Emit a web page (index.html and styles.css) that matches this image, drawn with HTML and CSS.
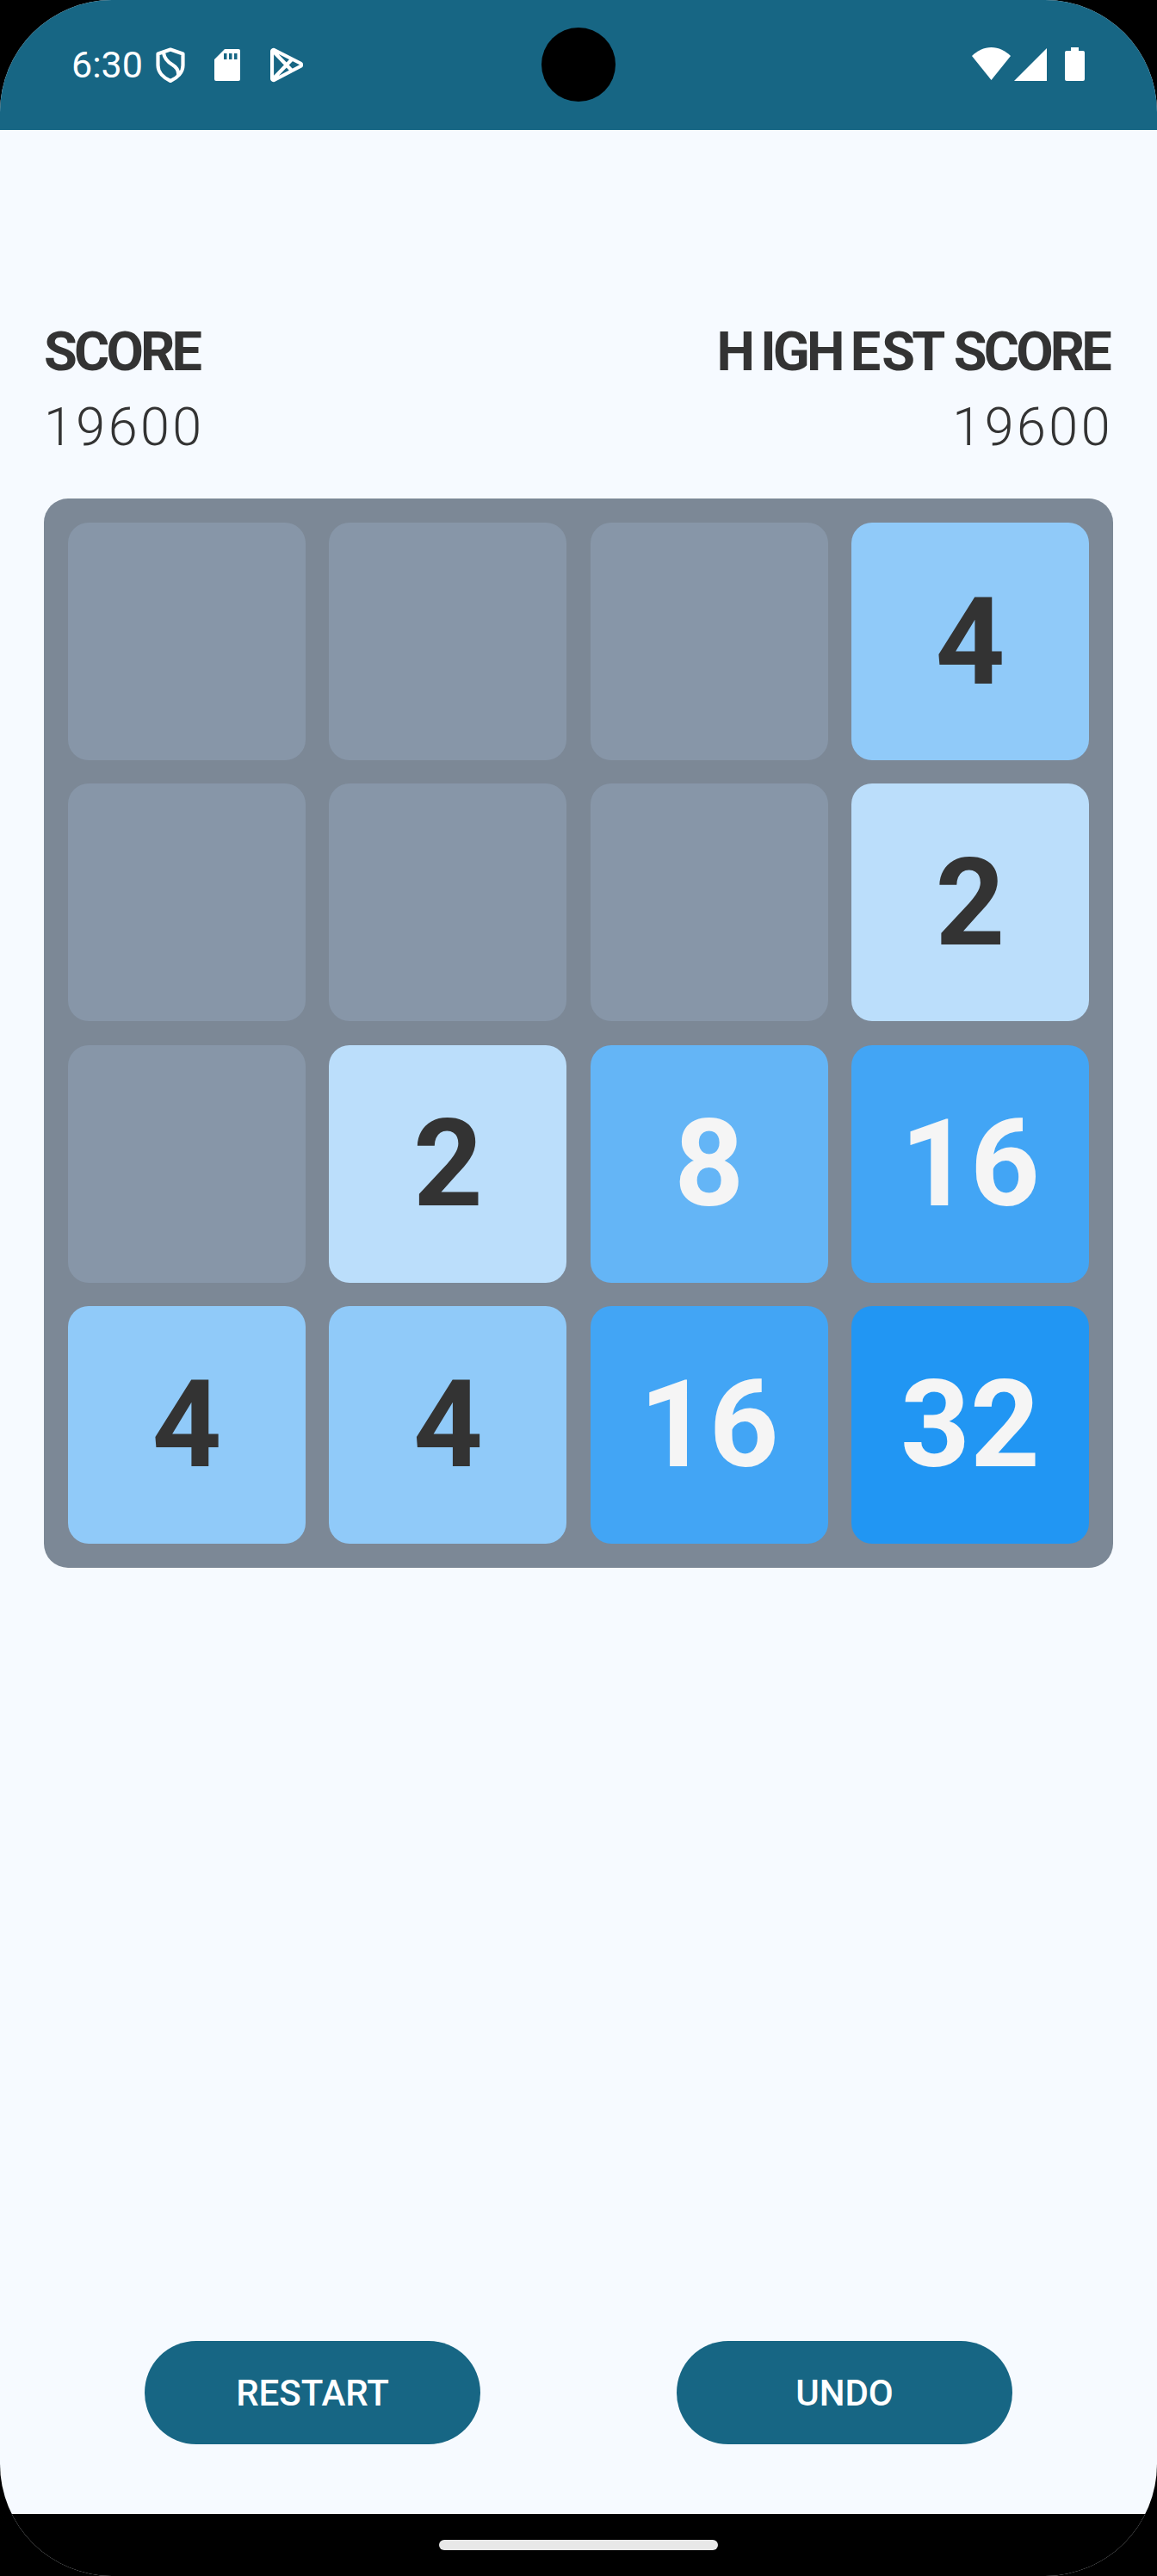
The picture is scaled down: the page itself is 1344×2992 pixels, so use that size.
FILE: index.html
```html
<!DOCTYPE html>
<html lang="en">
<head>
<meta charset="utf-8">
<title>2048</title>
<link rel="stylesheet" href="styles.css">
</head>
<body>
<div class="screen">
  <header class="status">
    <div class="status-left">
      <span class="time">6:30</span>
      <svg class="ic-shield" viewBox="0 0 34 41"><path d="M17 2.500 L31.500 7.500 V21 C31.500 29 25 35.500 17 39 C9 35.500 2.500 29 2.500 21 V7.500 Z M9 6.500 C10 13 14 17 19 20 C24 23 27 27 26 33" fill="none" stroke="#fff" stroke-width="4.200" stroke-linejoin="round"/></svg>
      <svg class="ic-sd" viewBox="0 0 30 37"><path fill="#fff" fill-rule="evenodd" d="M12 0 H28 a2 2 0 0 1 2 2 V35 a2 2 0 0 1 -2 2 H2 a2 2 0 0 1 -2 -2 V12 Z M11 5 V12 H14.500 V5 Z M17 5 V12 H20.500 V5 Z M23 5 V12 H26.500 V5 Z"/></svg>
      <svg class="ic-play" viewBox="0 0 38 41"><path d="M4.500 3 L35 18.500 a2 2 0 0 1 0 3.500 L4.500 38 a2 2 0 0 1 -2.500 -2 V5 a2 2 0 0 1 2.500 -2 Z M3 4 L25 27 M3 37 L25 14" fill="none" stroke="#fff" stroke-width="4.200" stroke-linejoin="round"/></svg>
    </div>
    <div class="status-right">
      <svg class="ic-wifi" viewBox="0 0 45 38"><path fill="#fff" d="M22.500 38 L0 10 C6 4 14 0 22.500 0 C31 0 39 4 45 10 Z"/></svg>
      <svg class="ic-signal" viewBox="0 0 38 38"><path fill="#fff" d="M38 0 V38 H0 Z"/></svg>
      <svg class="ic-battery" viewBox="0 0 23 39"><path fill="#fff" d="M7 0 H16 V4 H21 a2 2 0 0 1 2 2 V37 a2 2 0 0 1 -2 2 H2 a2 2 0 0 1 -2 -2 V6 a2 2 0 0 1 2 -2 H7 Z"/></svg>
    </div>
  </header>
  <div class="camera"></div>
  <main class="game">
    <section class="scores">
      <div class="score">
        <div class="score-label">SCORE</div>
        <div class="score-value">19600</div>
      </div>
      <div class="score score-end">
        <div class="score-label">H<span class="wide">I</span>GH<span class="wide">E</span><span class="mid">S</span>T SCORE</div>
        <div class="score-value">19600</div>
      </div>
    </section>
    <section class="board">
      <div class="tile"></div>
      <div class="tile"></div>
      <div class="tile"></div>
      <div class="tile t4">4</div>
      <div class="tile"></div>
      <div class="tile"></div>
      <div class="tile"></div>
      <div class="tile t2">2</div>
      <div class="tile"></div>
      <div class="tile t2">2</div>
      <div class="tile t8">8</div>
      <div class="tile t16">16</div>
      <div class="tile t4">4</div>
      <div class="tile t4">4</div>
      <div class="tile t16">16</div>
      <div class="tile t32">32</div>
    </section>
    <section class="actions">
      <button class="btn">RESTART</button>
      <button class="btn">UNDO</button>
    </section>
  </main>
  <footer class="navbar"><div class="handle"></div></footer>
</div>
</body>
</html>
```

FILE: styles.css
```css
* { box-sizing: border-box; }
html, body { margin: 0; padding: 0; background: #000; }
body { font-family: Roboto, "Liberation Sans", sans-serif; }

.screen {
  position: relative;
  width: 1344px;
  height: 2992px;
  display: flex;
  flex-direction: column;
  border-radius: 130px;
  overflow: hidden;
  background: #f6faff;
}

.status {
  height: 151px;
  flex: none;
  background: #176684;
  display: flex;
  justify-content: space-between;
  padding: 55px 84px 0 84px;
  color: #fff;
}
.status-left, .status-right { display: flex; align-items: flex-start; }
.time { font-size: 43px; line-height: 40px; width: 98px; margin-left: -1px; padding-right: 1px; }
.ic-shield { width: 34px; height: 41px; margin-right: 34px; }
.ic-sd { width: 30px; height: 37px; margin-top: 2px; margin-right: 35px; }
.ic-play { width: 38px; height: 41px; }
.ic-wifi { width: 45px; height: 38px; margin-right: 4px; }
.ic-signal { width: 38px; height: 38px; margin-top: 1px; margin-right: 21px; }
.ic-battery { width: 23px; height: 39px; }

.camera {
  position: absolute;
  left: 629px;
  top: 32px;
  width: 86px;
  height: 86px;
  border-radius: 50%;
  background: #000;
}

.game {
  flex: 1;
  display: flex;
  flex-direction: column;
  padding: 227px 51px 153px;
}

.scores { display: flex; justify-content: space-between; color: #333; }
.score-end { text-align: right; }
.score-label {
  font-size: 63px;
  line-height: 62px;
  font-weight: 700;
  letter-spacing: -3.800px;
}
.score-end .score-label { margin-right: 5px; word-spacing: 3px; }
.wide { margin-left: 10px; }
.mid { margin-left: 5px; }
.score-value {
  font-size: 61px;
  line-height: 62px;
  font-weight: 300;
  letter-spacing: 3.500px;
  margin-top: 25px;
}

.board {
  margin-top: 52px;
  width: 1242px;
  height: 1242px;
  padding: 28px;
  background: #7c8896;
  border-radius: 28px;
  display: grid;
  grid-template-columns: repeat(4, 276px);
  grid-template-rows: repeat(4, 276px);
  gap: 27.330px;
}

.tile {
  background: #8796a8;
  border-radius: 24px;
  display: flex;
  align-items: center;
  justify-content: center;
  font-size: 141px;
  font-weight: 700;
  color: #f5f5f5;
}
.t2 { background: #bbdefb; color: #333; }
.t4 { background: #90caf9; color: #333; }
.t8 { background: #64b5f6; }
.t16 { background: #42a5f5; }
.t32 { background: #2196f3; }

.actions {
  margin-top: auto;
  display: flex;
  justify-content: space-between;
  padding: 0 117px;
}
.btn {
  width: 390px;
  height: 120px;
  border: 0;
  border-radius: 60px;
  background: #176684;
  color: #fff;
  font-family: inherit;
  font-size: 42px;
  font-weight: 500;
  padding: 0;
}

.navbar {
  position: absolute;
  left: 0;
  right: 0;
  bottom: 0;
  height: 72px;
  background: #000;
  display: flex;
  justify-content: center;
  padding-top: 30px;
}
.handle {
  width: 324px;
  height: 12px;
  border-radius: 6px;
  background: #e8e8e8;
}
```
